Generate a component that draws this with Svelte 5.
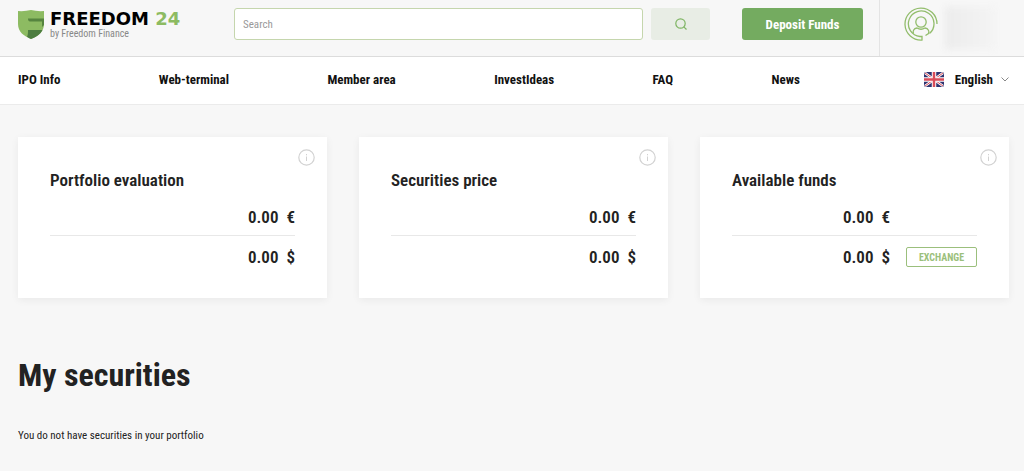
<script lang="ts">
	type Amount = { value: string; currency: string; exchange?: boolean };

	const links = ['IPO Info', 'Web-terminal', 'Member area', 'InvestIdeas', 'FAQ', 'News'];

	const cards: { title: string; amounts: Amount[] }[] = [
		{
			title: 'Portfolio evaluation',
			amounts: [
				{ value: '0.00', currency: '€' },
				{ value: '0.00', currency: '$' }
			]
		},
		{
			title: 'Securities price',
			amounts: [
				{ value: '0.00', currency: '€' },
				{ value: '0.00', currency: '$' }
			]
		},
		{
			title: 'Available funds',
			amounts: [
				{ value: '0.00', currency: '€', exchange: false },
				{ value: '0.00', currency: '$', exchange: true }
			]
		}
	];

	let query = $state('');
</script>

<div class="page">
	<header class="top">
		<a class="logo" href="/">
			<svg width="26" height="29" viewBox="0 0 26 29" aria-hidden="true">
				<path d="M0 1Q7 1.500 13 0Q19 1.500 26 1V14C26 22 20 26 13 29C6 26 0 22 0 14Z" fill="#8dbb62" />
				<path d="M10 8.500H26V15L24 17V11.500H12Q10 11.500 10 8.500Z" fill="#56853f" />
				<path d="M10 20H24.500C22.500 24.500 18 27 13 29C11.500 28.300 10 27.500 9 26.700C10 25 10 22 10 20Z" fill="#4d7d40" />
			</svg>
			<span class="logo-text">
				<span class="brand">FREEDOM <span class="accent">24</span></span>
				<span class="tagline">by Freedom Finance</span>
			</span>
		</a>

		<form class="search" role="search" onsubmit={(e) => e.preventDefault()}>
			<input type="text" placeholder="Search" aria-label="Search" bind:value={query} />
			<button type="submit" aria-label="Find">
				<svg width="12" height="12" viewBox="0 0 12 12" fill="none" stroke="#7fb564" stroke-width="1.200">
					<circle cx="5.500" cy="5.500" r="4.700" />
					<path d="M8.800 8.800L11.500 11.500" />
				</svg>
			</button>
		</form>

		<button class="deposit">Deposit Funds</button>

		<div class="account">
			<a href="/profile" aria-label="Profile">
				<svg width="34" height="34" viewBox="0 0 34 34" fill="none" stroke="#92bd6c" stroke-width="1.300">
					<path d="M33 17A16 16 0 1 0 18 33V29.500H16A12.800 12.800 0 1 1 25.500 26.500" />
					<circle cx="17" cy="15" r="5.200" />
					<path d="M9.500 26.500C8.500 24.500 9.500 21.500 13 21Q17 23.500 21 21C24.500 21.500 25.500 24.500 24.500 26.500L21.500 28.500" />
				</svg>
			</a>
			<span class="user-name"></span>
		</div>
	</header>

	<div class="menu">
		<nav>
			{#each links as link}
				<a href="/">{link}</a>
			{/each}
		</nav>
		<button class="language">
			<svg width="20" height="15" viewBox="0 0 20 15" aria-hidden="true">
				<rect width="20" height="15" rx="2" fill="#2d326f" />
				<path d="M1 1L19 14M19 1L1 14" stroke="#fff" stroke-width="2.500" />
				<path d="M1 1L19 14M19 1L1 14" stroke="#d94c59" stroke-width="1" />
				<path d="M10 0V15M0 7.500H20" stroke="#fff" stroke-width="4.500" />
				<path d="M10 0V15M0 7.500H20" stroke="#d94c59" stroke-width="2.500" />
			</svg>
			<span>English</span>
			<svg width="8" height="5" viewBox="0 0 8 5" fill="none" stroke="#888" aria-hidden="true">
				<path d="M0.500 0.500L4 4L7.500 0.500" />
			</svg>
		</button>
	</div>

	<main>
		<div class="cards">
			{#each cards as card}
				<section class="card">
					<button class="info" aria-label="About {card.title}">
						<svg width="17" height="17" viewBox="0 0 17 17" fill="none" stroke="#d2d2d2">
							<circle cx="8.500" cy="8.500" r="7.700" stroke-width="1.200" />
							<path d="M8.500 7.500V12M8.500 5V6.300" />
						</svg>
					</button>
					<h2>{card.title}</h2>
					{#each card.amounts as amount}
						<div class="amount">
							<span>{amount.value}</span>
							<span>{amount.currency}</span>
							{#if amount.exchange !== undefined}
								<div class="action">
									{#if amount.exchange}
										<button class="exchange">EXCHANGE</button>
									{/if}
								</div>
							{/if}
						</div>
					{/each}
				</section>
			{/each}
		</div>

		<h1>My securities</h1>
		<p>You do not have securities in your portfolio</p>
	</main>
</div>

<style>
	:global(body) {
		margin: 0;
		background: #f7f7f7;
	}

	.page {
		font-family: 'Roboto Condensed', Roboto, sans-serif;
		color: #222;
	}

	a {
		color: inherit;
		text-decoration: none;
	}

	button {
		font: inherit;
		color: inherit;
		padding: 0;
		border: none;
		background: none;
		cursor: pointer;
	}

	svg {
		display: block;
	}

	.top {
		display: flex;
		height: 56px;
		padding-left: 18px;
		border-bottom: 1px solid #dcdcdc;
	}

	.logo {
		display: flex;
		gap: 6px;
		width: 216px;
		padding-top: 10px;
		box-sizing: border-box;
		flex-shrink: 0;
	}

	.logo-text {
		display: flex;
		flex-direction: column;
		white-space: nowrap;
	}

	.brand {
		font: bold 18px/17px 'DejaVu Sans', sans-serif;
		color: #000;
	}

	.accent {
		color: #8dbb62;
	}

	.tagline {
		font-size: 10px;
		line-height: 14px;
		color: #888;
	}

	.search {
		display: flex;
		flex: 1;
		gap: 8px;
		height: 32px;
		margin-top: 8px;
	}

	.search input {
		flex: 1;
		min-width: 0;
		padding: 0 8px;
		border: 1px solid #c5d6ad;
		border-radius: 3px;
		background: #fff;
		font: inherit;
		font-size: 11px;
		outline: none;
	}

	.search input::placeholder {
		color: #999;
	}

	.search button {
		display: grid;
		place-items: center;
		width: 59px;
		border-radius: 3px;
		background: #e8ede5;
	}

	.deposit {
		width: 121px;
		height: 32px;
		margin: 8px 16px 0 32px;
		border-radius: 3px;
		background: #74ab60;
		color: #fff;
		font-size: 13px;
		font-weight: bold;
	}

	.account {
		display: flex;
		gap: 7px;
		width: 145px;
		box-sizing: border-box;
		padding: 7px 0 0 24px;
		border-left: 1px solid #e4e4e4;
	}

	.user-name {
		width: 50px;
		height: 42px;
		background: linear-gradient(90deg, #ececec, #f4f4f4);
		filter: blur(3px);
	}

	.menu {
		display: flex;
		align-items: center;
		height: 45px;
		padding: 0 15px 2px 18px;
		border-bottom: 1px solid #ebebeb;
		background: #fff;
		color: #111;
		font-size: 13px;
		font-weight: bold;
	}

	nav {
		display: flex;
		flex: 1;
		justify-content: space-between;
		margin-right: 124px;
	}

	.language {
		display: flex;
		align-items: center;
	}

	.language span {
		margin: 0 8px 0 11px;
	}

	main {
		padding: 32px 15px 24px 18px;
	}

	.cards {
		display: grid;
		grid-template-columns: repeat(3, 1fr);
		gap: 32px;
	}

	.card {
		position: relative;
		padding: 32px 32px 20px;
		background: #fff;
		box-shadow: 0 2px 8px rgba(0, 0, 0, 0.06);
	}

	.info {
		position: absolute;
		top: 12px;
		right: 12px;
	}

	h2 {
		margin: 0 0 8px;
		font-size: 17px;
		font-weight: 600;
		line-height: 22px;
	}

	.amount {
		display: flex;
		align-items: center;
		justify-content: flex-end;
		gap: 8px;
		height: 36px;
		font-size: 17px;
		font-weight: 600;
	}

	.amount + .amount {
		height: 42px;
		border-top: 1px solid #e8e8e8;
	}

	.action {
		width: 71px;
		margin-left: 8px;
	}

	.exchange {
		display: block;
		width: 100%;
		height: 20px;
		border: 1px solid #9bbf7c;
		border-radius: 2px;
		color: #9bbf7c;
		font-size: 10px;
		font-weight: bold;
	}

	h1 {
		margin: 56px 0 32px;
		font-size: 32px;
		line-height: 42px;
	}

	p {
		margin: 0;
		font-size: 11px;
		line-height: 16px;
	}
</style>
